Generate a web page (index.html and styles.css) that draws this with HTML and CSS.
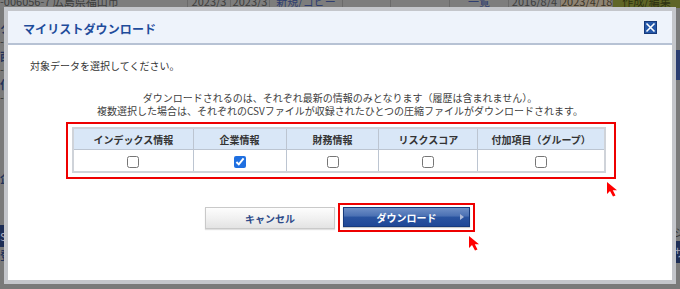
FILE: index.html
```html
<!DOCTYPE html>
<html lang="ja">
<head>
<meta charset="utf-8">
<title>マイリストダウンロード</title>
<link rel="stylesheet" href="styles.css">
</head>
<body>
<div class="page">
  <div class="bg-top">
    <span class="c c1">-006056-7 広島県福山市</span>
    <span class="c c2">2023/3</span>
    <span class="c c3">2023/3</span>
    <span class="c c4 link">新規/コピー</span>
    <span class="c c5"></span>
    <span class="c c6"></span>
    <span class="c c7 link">一覧</span>
    <span class="c c8">2016/8/4</span>
    <span class="c c9">2023/4/18</span>
    <span class="c c10">作成/編集</span>
  </div>
  <div class="bg-body">
    <div class="bg-left">
      <span class="frag big first">ク</span>
      <span class="frag">-2</span>
      <span class="frag big">西</span>
      <span class="frag">-0</span>
      <span class="frag big">化</span>
      <span class="frag">-0</span>
      <span class="frag gap big">企</span>
      <span class="frag navy">S</span>
      <span class="frag big">登</span>
    </div>
    <div class="bg-right">
      <span class="navy-bar"></span>
      <span class="frag r-ji">ジ</span>
      <span class="frag navy r-sa">サ</span>
    </div>
  </div>
</div>

<div class="dialog">
  <div class="dialog-header">
    <span class="dialog-title">マイリストダウンロード</span>
    <span class="close-btn" aria-label="閉じる">
      <svg width="13" height="13" viewBox="0 0 13 13">
        <rect x="0.5" y="0.5" width="12" height="12" fill="#2457a8" stroke="#17397a"/>
        <path d="M2.5 2.5 L10.5 10.5 M10.5 2.5 L2.5 10.5" stroke="#fff" stroke-width="1.6"/>
      </svg>
    </span>
  </div>
  <div class="dialog-body">
    <p class="lead">対象データを選択してください。</p>
    <p class="note">ダウンロードされるのは、それぞれ最新の情報のみとなります（履歴は含まれません）。<br>複数選択した場合は、それぞれのCSVファイルが収録されたひとつの圧縮ファイルがダウンロードされます。</p>
    <div class="highlight table-wrap">
      <table class="choice">
        <thead>
          <tr>
            <th class="w1">インデックス情報</th>
            <th class="w2">企業情報</th>
            <th class="w3">財務情報</th>
            <th class="w4">リスクスコア</th>
            <th class="w5">付加項目（グループ）</th>
          </tr>
        </thead>
        <tbody>
          <tr>
            <td><input type="checkbox"></td>
            <td><input type="checkbox" checked></td>
            <td><input type="checkbox"></td>
            <td><input type="checkbox"></td>
            <td><input type="checkbox"></td>
          </tr>
        </tbody>
      </table>
    </div>
    <div class="actions">
      <button class="btn btn-cancel" type="button">キャンセル</button>
      <div class="highlight btn-wrap">
        <button class="btn btn-primary" type="button">ダウンロード<span class="arrow"></span></button>
      </div>
    </div>
  </div>
  <svg class="cursor cursor-a" width="14" height="16" viewBox="0 0 14 16"><path d="M1 1 L1 13 L4 10 L7 15.5 L9.5 14.5 L6.8 9.2 L11 9.2 Z" fill="#f00"/></svg>
  <svg class="cursor cursor-b" width="14" height="16" viewBox="0 0 14 16"><path d="M1 1 L1 13 L4 10 L7 15.5 L9.5 14.5 L6.8 9.2 L11 9.2 Z" fill="#f00"/></svg>
</div>
</body>
</html>
```
FILE: styles.css
```css
html, body {
  margin: 0;
  padding: 0;
}
body {
  width: 680px;
  height: 289px;
  overflow: hidden;
  position: relative;
  background: #7a7a7a;
  font-family: "Noto Sans CJK JP", "Noto Sans", sans-serif;
}

/* dimmed page behind the modal */
.page {
  width: 680px;
  height: 289px;
  display: flex;
  flex-direction: column;
}
.bg-top {
  display: flex;
  height: 8px;
  overflow: hidden;
  background: #7d7d7d;
}
.c {
  display: block;
  height: 16px;
  margin-top: -7px;
  line-height: 16px;
  font-size: 11px;
  color: #3c3c3c;
  white-space: nowrap;
  overflow: hidden;
  border-right: 1px solid #6a6a6a;
  box-sizing: border-box;
  text-align: center;
}
.c1 { width: 188px; text-align: left; }
.c2 { width: 43px; }
.c3 { width: 39px; }
.c4 { width: 73px; }
.c5 { width: 48px; }
.c6 { width: 59px; }
.c7 { width: 59px; }
.c8 { width: 52px; }
.c9 { width: 52px; background: #8e8373; color: #3a3328; }
.c10 { width: 67px; background: #5f6527; color: #2d3010; border-right: 0; }
.link { color: #2f3e70; }

.bg-body {
  flex: 1;
  display: flex;
  justify-content: space-between;
}
.bg-left, .bg-right {
  width: 6px;
  display: flex;
  flex-direction: column;
  overflow: hidden;
}
.frag {
  display: block;
  width: 6px;
  height: 13px;
  overflow: hidden;
  font-size: 11px;
  line-height: 13px;
  color: #333;
  white-space: nowrap;
}
.frag.big { font-weight: 700; color: #23335a; margin-top: 2px; }
.frag.first { margin-top: 14px; }
.frag.gap { margin-top: 68px; }
.frag.navy {
  margin-top: 40px;
  height: 22px;
  line-height: 22px;
  background: #1d2d55;
  color: #aab;
}
.navy-bar {
  display: block;
  margin-top: 42px;
  height: 30px;
  width: 4px;
  margin-left: 2px;
  background: #2a3c70;
}
.r-ji { margin-top: 146px; }
.frag.r-sa { margin-top: 2px; }

/* modal */
.dialog {
  position: absolute;
  left: 4px;
  top: 7px;
  width: 664px;
  height: 269px;
  border: 4px solid #c4c6cb;
  background: #fff;
}
.dialog-header {
  height: 30px;
  padding: 2px 15px 0 15px;
  background: #eef3fb;
  border-bottom: 2px solid #b7c2d4;
  display: flex;
  align-items: center;
  justify-content: space-between;
}
.dialog-title {
  font-size: 12px;
  font-weight: 700;
  color: #1f4c9b;
  letter-spacing: 0.1px;
}
.close-btn {
  display: flex;
  width: 13px;
  height: 13px;
  margin-top: -1px;
}

.dialog-body {
  padding: 0 22px;
  color: #333;
}
.lead {
  margin: 14px 0 0 0;
  font-size: 10px;
  line-height: 14px;
}
.note {
  margin: 18px 0 0 0;
  font-size: 10px;
  line-height: 13px;
  text-align: center;
  color: #404040;
}

.highlight {
  border: 2px solid #ee0000;
}
.table-wrap {
  margin: 5px 0 0 36px;
  width: 538px;
  padding: 3px 4px 4px 4px;
}
.choice {
  width: 534px;
  border-collapse: collapse;
  border: 2px solid #cfd3d9;
  font-size: 10px;
  color: #333;
}
.choice th {
  height: 20px;
  padding: 0;
  background: #d9e7f7;
  border: 1px solid #bcc5d1;
  font-weight: 700;
  text-align: center;
}
.choice td {
  height: 21px;
  padding: 0;
  border: 1px solid #bcc5d1;
  text-align: center;
  vertical-align: middle;
}
.choice input {
  margin: 0;
  width: 12px;
  height: 12px;
  vertical-align: middle;
  accent-color: #1f6fe0;
}
.w1 { width: 120px; }
.w2 { width: 93px; }
.w3 { width: 93px; }
.w4 { width: 99px; }
.w5 { width: 127px; }

.actions {
  margin-top: 24px;
  display: flex;
  justify-content: center;
  align-items: center;
  gap: 3px;
}
.btn {
  font-family: "Noto Sans CJK JP", "Noto Sans", sans-serif;
  font-size: 10px;
  font-weight: 700;
  padding: 0;
  cursor: pointer;
}
.btn-cancel {
  width: 130px;
  height: 22px;
  margin-top: 1px;
  color: #2d4a88;
  background: linear-gradient(#fdfdfd, #f1f1f1 50%, #e3e3e3);
  border: 1px solid #c9c9c9;
  box-shadow: 0 1px 1px rgba(0,0,0,0.12);
}
.btn-wrap {
  padding: 2px 3px 3px 3px;
  display: flex;
}
.btn-primary {
  position: relative;
  width: 127px;
  height: 20px;
  color: #fff;
  border: 1px solid #173a7c;
  background: linear-gradient(#6f8fc6, #4a70b3 45%, #2a54a0 50%, #1f4797);
  box-shadow: 0 1px 1px rgba(0,0,0,0.2);
}
.arrow {
  position: absolute;
  right: 5px;
  top: 6px;
  width: 0;
  height: 0;
  border-top: 3.5px solid transparent;
  border-bottom: 3.5px solid transparent;
  border-left: 4px solid #aebad6;
}

.cursor {
  position: absolute;
}
.cursor-a { left: 598px; top: 170px; }
.cursor-b { left: 460px; top: 224px; }
```
